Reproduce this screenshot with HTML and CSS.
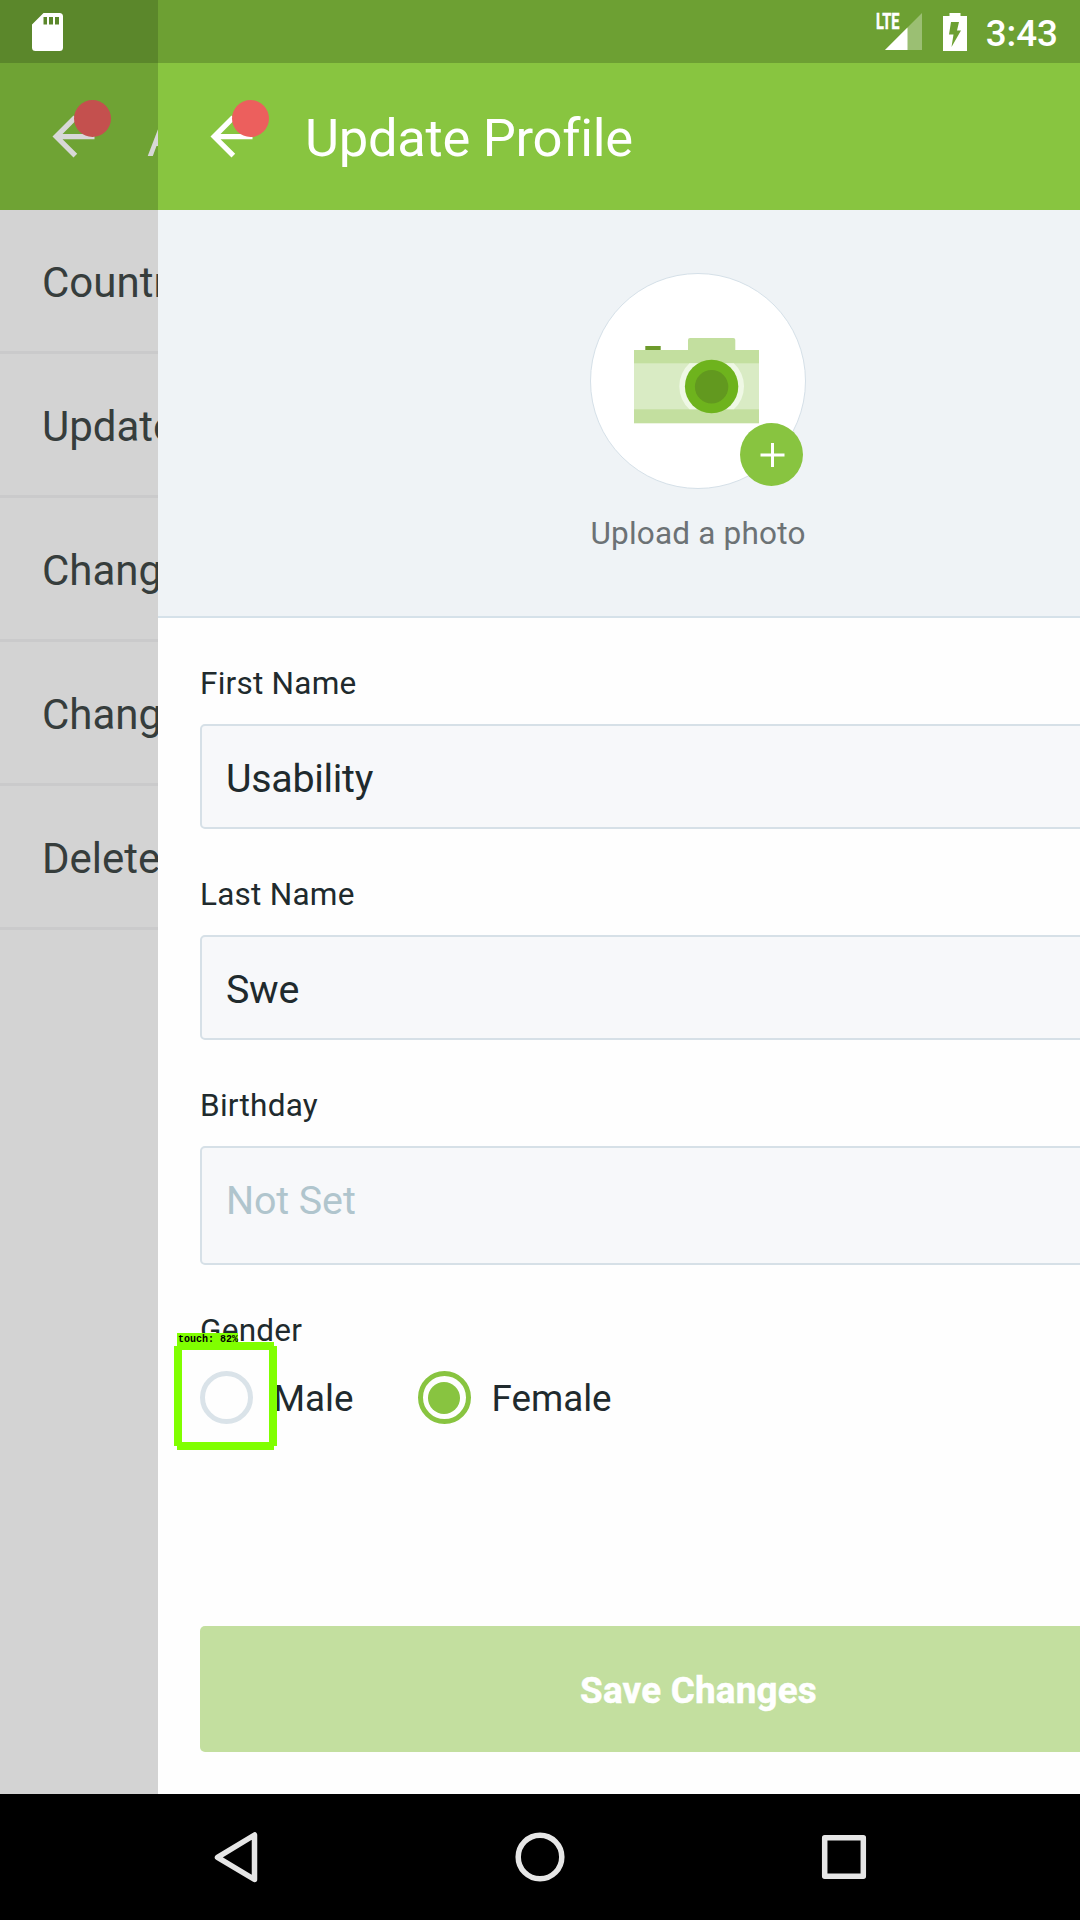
FILE: index.html
```html
<!DOCTYPE html>
<html lang="en">
<head>
<meta charset="utf-8">
<title>Update Profile</title>
<link rel="stylesheet" href="styles.css">
</head>
<body>
<div class="device">
  <div class="screens">
    <section class="screen screen-back">
      <div class="status-strip"></div>
      <header class="app-bar">
        <div class="back">
          <svg class="arrow" viewBox="0 0 24 24"><path fill="currentColor" d="M20 11H7.83l5.59-5.59L12 4l-8 8 8 8 1.41-1.41L7.83 13H20v-2z"/></svg>
          <span class="badge"></span>
        </div>
        <h1 class="title">Account</h1>
      </header>
      <ul class="menu">
        <li>Country</li>
        <li>Update</li>
        <li>Change</li>
        <li>Change</li>
        <li>Delete</li>
      </ul>
    </section>

    <section class="screen screen-front">
      <div class="status-strip"></div>
      <header class="app-bar">
        <div class="back">
          <svg class="arrow" viewBox="0 0 24 24"><path fill="currentColor" d="M20 11H7.83l5.59-5.59L12 4l-8 8 8 8 1.41-1.41L7.83 13H20v-2z"/></svg>
          <span class="badge"></span>
        </div>
        <h1 class="title">Update Profile</h1>
      </header>
      <div class="photo">
        <div class="avatar">
          <svg class="camera" viewBox="0 0 125 86">
            <rect x="11.3" y="8" width="15.4" height="5" fill="#6d9a2b"/>
            <path d="M54 14V2q0-2 2-2h43.300q2 0 2 2v12z" fill="#c3df9f"/>
            <rect y="12" width="125" height="73.300" fill="#c3df9f"/>
            <rect y="25.300" width="125" height="46" fill="#d9ebc4"/>
            <path d="M55.500 25.300h44.300a31 31 0 0 1 0 46H55.500a31 31 0 0 1 0-46z" fill="#eff8e5"/>
            <circle cx="77.600" cy="48.500" r="26.700" fill="#6eb31d"/>
            <circle cx="77.600" cy="48.800" r="16.700" fill="#62991f"/>
          </svg>
          <svg class="add" viewBox="0 0 63 63"><circle cx="31.500" cy="31.500" r="31.500" fill="#88c440"/><path d="M20.500 32h24M32.500 20v24" stroke="#fff" stroke-width="3"/></svg>
        </div>
        <p class="caption">Upload a photo</p>
      </div>
      <form class="form">
        <div class="field"><span class="label">First Name</span><div class="input">Usability</div></div>
        <div class="field"><span class="label">Last Name</span><div class="input">Swe</div></div>
        <div class="field"><span class="label">Birthday</span><div class="input date">Not Set</div></div>
        <div class="field">
          <span class="label">Gender</span>
          <div class="options">
            <span class="option"><span class="radio"></span>Male</span>
            <span class="option"><span class="radio checked"></span>Female</span>
            <div class="touch">
              <span class="touch-label">touch: 82%</span>
              <svg viewBox="0 0 103 108" shape-rendering="crispEdges"><path fill="#80ff00" d="M3 0H100V4H103V104H100V108H3V104H0V4H3zM8 8V100H95V8z" fill-rule="evenodd"/></svg>
            </div>
          </div>
        </div>
        <div class="save">Save Changes</div>
      </form>
    </section>

    <div class="status">
      <svg class="sd" viewBox="0 0 31 38"><path fill="#fff" fill-rule="evenodd" d="M11.500 0H27.500Q31 0 31 3.500V34.500Q31 38 27.500 38H3.500Q0 38 0 34.500V11.500zM11.500 4V11.500H15V4zM17 4V11.500H21V4zM23 4V11.500H27V4z"/></svg>
      <div class="status-right">
        <div class="signal">
          <svg viewBox="0 0 37 37"><path d="M37 0V37H0z" fill="#9bbf73"/><path d="M22.500 14.500V37H0z" fill="#fff"/></svg>
          <span class="lte">LTE</span>
        </div>
        <svg class="battery" viewBox="0 0 24 38"><path fill="#fff" d="M6.500 0h11v3H24v35H0V3h6.500z"/><path fill="#6da033" d="M8 9h8l-2 8.500h4L8.500 34l2-12.500H6z"/></svg>
        <span class="clock">3:43</span>
      </div>
    </div>
  </div>

  <nav class="nav">
    <svg viewBox="0 0 72 72"><path d="M54.500 14v44.500L17.500 36.300z"/></svg>
    <svg viewBox="0 0 72 72"><circle cx="36" cy="36" r="21.800"/></svg>
    <svg viewBox="0 0 72 72"><rect x="16.700" y="16.700" width="38.600" height="38.600"/></svg>
  </nav>
</div>
</body>
</html>
```
FILE: styles.css
```css
* { box-sizing: border-box; margin: 0; padding: 0; }

body {
  width: 1080px;
  height: 1920px;
  overflow: hidden;
  font-family: Roboto, "Liberation Sans", sans-serif;
  color: #202a2d;
}

svg { display: block; flex: none; }

.device { display: flex; flex-direction: column; height: 1920px; }

.screens { position: relative; display: flex; height: 1794px; overflow: hidden; }
.screen { display: flex; flex-direction: column; flex: none; overflow: hidden; }
.screen-back { width: 158px; background: #d3d3d3; }
.screen-front { width: 1080px; background: #fefefe; }

.status-strip { flex: none; height: 63px; background: #6da033; }
.screen-back .status-strip { background: #5b872b; }

.app-bar {
  display: flex;
  align-items: center;
  flex: none;
  gap: 42px;
  height: 147px;
  padding-left: 42px;
  background: #88c540;
  color: #fff;
}
.screen-back .app-bar { background: #6fa334; color: #d8d8d8; }

.back { position: relative; flex: none; }
.arrow { width: 63px; height: 63px; }
.badge {
  position: absolute;
  top: -5px;
  left: 32px;
  width: 37px;
  height: 37px;
  border-radius: 50%;
  background: #ec5f5d;
}
.screen-back .badge { background: #c4504e; }

.title {
  padding-top: 2px;
  font-size: 52.5px;
  font-weight: 400;
  line-height: 62px;
  letter-spacing: -0.28px;
  white-space: nowrap;
}

.menu { list-style: none; color: #363d3c; }
.menu li {
  height: 144px;
  padding-left: 42px;
  border-bottom: 3px solid #cacacb;
  font-size: 42px;
  line-height: 146px;
  white-space: nowrap;
}

.photo {
  display: flex;
  flex-direction: column;
  align-items: center;
  flex: none;
  gap: 26px;
  height: 408px;
  padding-top: 63px;
  border-bottom: 2px solid #d5e1e9;
  background: #eff3f6;
}
.avatar {
  position: relative;
  display: flex;
  width: 216px;
  height: 216px;
  padding: 63.5px 0 0 43px;
  border: 1.5px solid #d5e0e8;
  border-radius: 50%;
  background: #fff;
}
.camera { width: 125px; height: 86px; }
.add { position: absolute; left: 149px; top: 149px; width: 63px; height: 63px; }
.caption { font-size: 31.5px; line-height: 37px; letter-spacing: 0.2px; color: #6c7275; }

.form { display: flex; flex-direction: column; flex: 1; padding: 47px 42px 42px; }
.field { display: flex; flex-direction: column; gap: 22px; margin-bottom: 47px; }
.label { font-size: 31.5px; line-height: 37px; letter-spacing: 0.25px; }
.input {
  height: 105px;
  padding-left: 24px;
  border: 2px solid #d6e0e7;
  border-radius: 5px;
  background: #f7f8fa;
  font-size: 39.4px;
  line-height: 106px;
  letter-spacing: -0.3px;
}
.input.date { height: 119px; color: #b0c5cd; letter-spacing: -0.1px; }

.options { position: relative; display: flex; gap: 64px; }
.option { display: flex; align-items: flex-start; gap: 20px; height: 53px; font-size: 36.75px; line-height: 56px; }
.radio { display: flex; width: 53px; height: 53px; border: 5px solid #dae3e9; border-radius: 50%; }
.radio.checked { margin-right: 1px; border-color: #88c440; }
.radio.checked::before {
  content: "";
  width: 32px;
  height: 32px;
  margin: auto;
  border-radius: 50%;
  background: #88c440;
}

.touch { position: absolute; left: -26px; top: -38px; display: flex; flex-direction: column; width: 103px; }
.touch-label {
  width: 61px;
  height: 9px;
  margin-left: 3px;
  padding-left: 1px;
  background: #80ff00;
  color: #000;
  font: 700 10px/14px "Liberation Mono", monospace;
  white-space: nowrap;
}
.touch svg { width: 103px; height: 108px; }

.save {
  height: 126px;
  margin-top: auto;
  padding-left: 1px;
  border-radius: 5px;
  background: #c3df9f;
  color: #fff;
  font-size: 36.75px;
  font-weight: 700;
  line-height: 130px;
  letter-spacing: 0.25px;
  text-align: center;
  -webkit-text-stroke: 0.5px #fff;
}

.status {
  position: absolute;
  inset: 0 0 auto;
  display: flex;
  align-items: center;
  justify-content: space-between;
  height: 63px;
  padding: 0 22px 0 32px;
  color: #fff;
}
.sd { width: 31px; height: 38px; }
.status-right { display: flex; align-items: center; gap: 21px; }
.signal { position: relative; }
.signal svg { width: 37px; height: 37px; }
.lte {
  position: absolute;
  left: -9px;
  top: 0;
  font: 700 22px/18px Roboto, sans-serif;
  transform: scaleX(.66);
  transform-origin: left;
  -webkit-text-stroke: 0.5px #fff;
}
.battery { width: 24px; height: 38px; }
.clock { font-size: 36.75px; font-weight: 500; line-height: 44px; padding-top: 4px; margin-left: -2px; }

.nav { display: flex; align-items: center; justify-content: center; gap: 232px; height: 126px; background: #000; }
.nav svg { width: 72px; height: 72px; fill: none; stroke: #e6e6e6; stroke-width: 5.5; stroke-linejoin: round; }
```
